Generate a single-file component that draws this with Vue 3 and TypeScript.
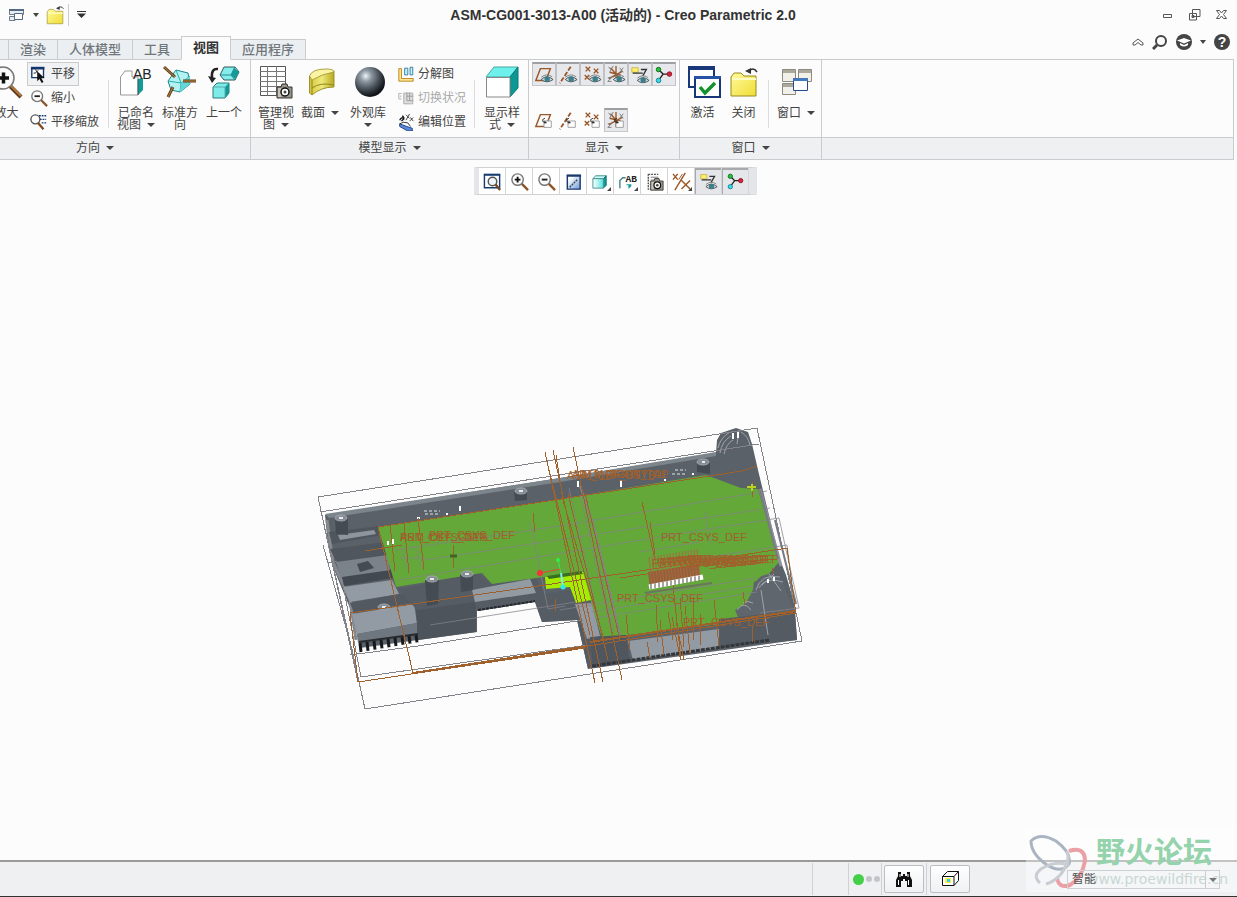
<script setup lang="ts">
import { ref } from 'vue'

interface Tool { icon: string; label: string }
interface Big extends Tool { lines: string[]; caret?: boolean; width: string }
interface Small extends Tool { framed?: boolean; off?: boolean }
interface Toggle extends Tool { on: boolean; more?: boolean }

const tabs = ['渲染', '人体模型', '工具', '视图', '应用程序']
const activeTab = ref('视图')

const orient: Big[] = [
  { icon: 'named', label: '已命名视图', lines: ['已命名', '视图'], caret: true, width: 'mid' },
  { icon: 'standard', label: '标准方向', lines: ['标准方', '向'], width: 'mid' },
  { icon: 'previous', label: '上一个', lines: ['上一个'], width: 'mid' },
]
const zooms: Small[] = [
  { icon: 'pan', label: '平移', framed: true },
  { icon: 'minus', label: '缩小' },
  { icon: 'panzoom', label: '平移缩放' },
]
const model: Big[] = [
  { icon: 'manage', label: '管理视图', lines: ['管理视', '图'], caret: true, width: 'mid' },
  { icon: 'section', label: '截面', lines: ['截面'], caret: true, width: 'mid' },
  { icon: 'sphere', label: '外观库', lines: ['外观库', ''], caret: true, width: 'wide' },
]
const explode: Small[] = [
  { icon: 'explode', label: '分解图' },
  { icon: 'switch', label: '切换状况', off: true },
  { icon: 'editpos', label: '编辑位置' },
]
const shownRows = ref<Toggle[][]>([
  [
    { icon: 'plane-eye', label: '平面显示', on: true },
    { icon: 'axis-eye', label: '轴显示', on: true },
    { icon: 'point-eye', label: '点显示', on: true },
    { icon: 'csys-eye', label: '坐标系显示', on: true },
    { icon: 'note-eye', label: '注释显示', on: true },
    { icon: 'spin', label: '旋转中心', on: true },
  ],
  [
    { icon: 'plane-tag', label: '平面标记', on: false },
    { icon: 'axis-tag', label: '轴标记', on: false },
    { icon: 'point-tag', label: '点标记', on: false },
    { icon: 'csys-tag', label: '坐标系标记', on: true },
  ],
])
const floating = ref<Toggle[]>([
  { icon: 'refit', label: '重新调整', on: false },
  { icon: 'plus', label: '放大', on: false },
  { icon: 'minus', label: '缩小', on: false },
  { icon: 'repaint', label: '重画', on: false },
  { icon: 'cube', label: '显示样式', on: false, more: true },
  { icon: 'saved', label: '已命名视图', on: false, more: true },
  { icon: 'manager', label: '视图管理器', on: false },
  { icon: 'datum', label: '基准显示过滤器', on: false, more: true },
  { icon: 'note-eye', label: '注释显示', on: true },
  { icon: 'spin', label: '旋转中心', on: true },
])
const filter = ref('智能')

const fins = [0, 1, 2, 3, 4, 5, 6, 7, 8]
const pins = Array.from({ length: 13 }, (_, i) => i)
const combs = Array.from({ length: 17 }, (_, i) => i)
const tags = [
  [400, 541], [429, 539], [661, 541], [617, 602], [683, 626],
]
const denseTags = Array.from({ length: 9 }, (_, i) => [652 + i * 5, 567 - Math.round(i / 2)])
</script>

<template>
  <div class="app">
    <svg class="defs" width="0" height="0" aria-hidden="true">
      <defs>
        <radialGradient id="ball" cx=".36" cy=".3" r=".75"><stop offset="0" stop-color="#eef3f6" /><stop offset=".25" stop-color="#8d98a2" /><stop offset=".6" stop-color="#454d55" /><stop offset=".9" stop-color="#111418" /></radialGradient>
        <linearGradient id="gold" x2="1" y2="1"><stop offset="0" stop-color="#fffb9c" /><stop offset="1" stop-color="#f0dc35" /></linearGradient>
        <linearGradient id="olive"><stop offset="0" stop-color="#d4c63c" /><stop offset=".5" stop-color="#efe97a" /><stop offset="1" stop-color="#b9a91f" /></linearGradient>
        <linearGradient id="sheet" x2="1" y2="1"><stop offset=".2" stop-color="#fff" /><stop offset="1" stop-color="#6f9bd8" /></linearGradient>
        <linearGradient id="ice"><stop offset="0" stop-color="#fff" /><stop offset="1" stop-color="#54e6e4" /></linearGradient>

        <g id="eye"><path d="M8 16Q14 10 21 16Q14 21 8 16Z" fill="#d7dde0" stroke="#444b50" /><circle cx="14.5" cy="15.5" r="3" fill="#3b7f8c" /><path d="M8 13.500Q14 8.500 20 13" fill="none" stroke="#777" /></g>
        <g id="tag"><path d="M11 13L13 11H19V18H11Z" fill="#fff" stroke="#999" /><path d="M12 8Q8 9 10 12L14 13M12 10.500V14" fill="none" stroke="#222" /></g>
        <g id="plane" fill="none" stroke="#9a5728" stroke-width="1.600"><path d="M7 4H18L13 17H2Z" /></g>
        <g id="axis"><path d="M14 2L2 20" stroke="#9a5728" stroke-width="2" stroke-dasharray="5 2" /></g>
        <g id="points" stroke="#9a5728" stroke-width="1.500"><path d="M4 2l5 5M9 2l-5 5M13 4l5 5M18 4l-5 5M3 11l5 5M8 11l-5 5" /></g>
        <g id="csys"><path d="M5 3L17 17M11 1V18M3 15L18 7M4 8L16 11" stroke="#9a5728" stroke-width="1.500" /><path d="M3 2l2 3M8 1L4 8M15 3l4 5M19 3l-4 5M2 14H6L2 18H6" fill="none" stroke="#777" /></g>
        <g id="glass"><circle cx="8" cy="8" r="6" fill="#fdfdfd" stroke="#777" stroke-width="1.500" /><path d="M12.500 12.500L19 19" stroke="#8c5428" stroke-width="2.500" /></g>
        <g id="camera"><path d="M1 4H5L6 1H11L12 4H16V15H1Z" fill="#98958c" stroke="#36342f" /><path d="M2 5H5V14H2Z" fill="#c9c5ba" /><circle cx="9" cy="9" r="4" fill="#fff" stroke="#111" stroke-width="1.500" /><circle cx="9" cy="9" r="1.500" fill="#444" /></g>
      </defs>

      <symbol id="bigplus" viewBox="0 0 36 36"><path d="M21 22L32 33" stroke="#5e3717" stroke-width="4" /><path d="M22 22L32 32" stroke="#b5763e" stroke-width="2" /><circle cx="14" cy="14" r="11" fill="#fafafa" stroke="#777" stroke-width="1.500" /><path d="M9 14H20M14.500 8.500V19.500" stroke="#111" stroke-width="3.500" /></symbol>
      <symbol id="named" viewBox="0 0 36 36"><path d="M2.500 13L7 7H14V13H20V31H2.500Z" fill="#fff" stroke="#999" /><path d="M20 15L25 14V26L20 31Z" fill="#0d9c96" /><path d="M20 15V31" stroke="#555" /><text x="15" y="15" font-family="Liberation Sans, sans-serif" font-size="14" fill="#222">AB</text></symbol>
      <symbol id="standard" viewBox="0 0 36 36"><path d="M6 17L14 6L26 9L28 20L18 28L9 26Z" fill="#b4f1f1" stroke="#18868b" /><path d="M6 17L19 19L28 12M19 19L18 28M14 6L19 19" fill="none" stroke="#27aeb2" /><path d="M19 19L28 12V20L18 28Z" fill="#63d7d8" /><path d="M2 3L13 13M21 17H34M11 23L6 33" stroke="#604019" stroke-width="3" /><path d="M2 3L13 13M21 17H34M11 23L6 33" stroke="#b98842" /></symbol>
      <symbol id="previous" viewBox="0 0 36 36"><path d="M12 5Q5 4 6 14" fill="none" stroke="#222" stroke-width="2.500" /><path d="M2 12L10 14L6 19Z" fill="#222" /><path d="M14 11L18 3H29L33 8L29 16H18Z" fill="#85eeec" stroke="#31595d" /><path d="M14 11H25L29 3M25 11L29 16" fill="none" stroke="#26888b" /><path d="M28 4L33 8L29 15L25 11Z" fill="#159999" /><path d="M7 23L11 19H23V29L19 34H7Z" fill="#7eebe9" stroke="#287a7d" /><path d="M19 23L23 19V29L19 34Z" fill="#119999" /><path d="M7 23H19V34" fill="none" stroke="#5faaac" /></symbol>
      <symbol id="manage" viewBox="0 0 36 36"><path d="M2.500 2.500H27.500V31.500H2.500Z" fill="#fff" stroke="#555" /><path d="M2 7.500H28M2 12.500H28M2 17.500H28M2 22.500H28M2 27.500H28M9.500 2V32M18.500 2V32" stroke="#777" /><use href="#camera" x="18" y="19" /></symbol>
      <symbol id="section" viewBox="0 0 36 36"><path d="M7.500 12V29L10 31Q19 23 32 23V7Z" fill="url(#olive)" stroke="#9c912b" /><path d="M7.500 12Q10 5 24 5Q32 5 32 8Q20 10 10 16Z" fill="#f8f4a4" stroke="#ada13d" /><path d="M10 16V30M10 24Q18 18 32 21" fill="none" stroke="#8e861f" /></symbol>
      <symbol id="sphere" viewBox="0 0 36 36"><circle cx="20" cy="18" r="15" fill="url(#ball)" /></symbol>
      <symbol id="style" viewBox="0 0 36 36"><path d="M2 13L10 3H34L26 13Z" fill="#6ef1ec" stroke="#4ba7a5" /><path d="M26 13L34 3V24L26 33Z" fill="#0b9793" stroke="#087a78" /><path d="M2.500 13.500H26V33H2.500Z" fill="#fff" stroke="#888" /></symbol>
      <symbol id="activate" viewBox="0 0 36 36"><path d="M4 3H29V23H4Z" fill="#fff" stroke="#173778" stroke-width="2" /><path d="M3 2H30V6H3Z" fill="#173778" /><path d="M10 13H35V33H10Z" fill="#fff" stroke="#173778" stroke-width="2" /><path d="M9 12H36V15H9Z" fill="#2454a3" /><path d="M15 23L20 29L30 19" fill="none" stroke="#13912a" stroke-width="3.500" /></symbol>
      <symbol id="folder" viewBox="0 0 36 36"><path d="M5 13L8 9H15L18 12H30V32H5Z" fill="url(#gold)" stroke="#978a24" /><path d="M6 15H30" stroke="#fffcc4" stroke-width="2" /><path d="M22 8Q27 2 31 8" fill="none" stroke="#333" stroke-width="1.500" /><path d="M19 7L25 4V10Z" fill="#333" /></symbol>
      <symbol id="windows" viewBox="0 0 36 36"><g fill="#f1f0e9" stroke="#8d8b80"><path d="M4.500 5.500H17.500V17.500H4.500ZM20.500 5.500H33.500V17.500H20.500ZM4.500 19.500H17.500V30.500H4.500Z" /></g><path d="M5 7.500H17M21 7.500H33M5 21.500H17" stroke="#aaa89b" stroke-width="3" /><path d="M15.500 14.500H29.500V26.500H15.500Z" fill="#fff" stroke="#244d88" /><path d="M15 15.500H30" stroke="#4378bd" stroke-width="3" /></symbol>

      <symbol id="pan" viewBox="0 0 20 20"><path d="M2 3H15V14H2Z" fill="#fff" stroke="#12356b" stroke-width="1.500" /><path d="M1 2H16V5H1Z" fill="#12356b" /><path d="M6 5L8 8M4 9H6M9 6L6 9" stroke="#111" /><path d="M8 7V18L10.500 15.500L13 20L15 19L12.500 14.500H16Z" fill="#111" /></symbol>
      <symbol id="minus" viewBox="0 0 20 20"><use href="#glass" /><path d="M5 8H11" stroke="#222" stroke-width="2" /></symbol>
      <symbol id="plus" viewBox="0 0 20 20"><use href="#glass" /><path d="M5 8H11M8 5V11" stroke="#111" stroke-width="2" /></symbol>
      <symbol id="panzoom" viewBox="0 0 20 20"><circle cx="6" cy="7" r="5" fill="#fff" stroke="#555" stroke-width="1.500" /><path d="M9 11L15 18" stroke="#7c481f" stroke-width="2.500" /><path d="M10 3H18M11 7H18M13 11H18" stroke="#1c3e72" stroke-width="1.500" stroke-dasharray="2 1" /></symbol>
      <symbol id="explode" viewBox="0 0 20 20"><path d="M2 4H5V15H18V18H2Z" fill="#ffe68b" stroke="#b78220" /><path d="M8.500 3.500H12V11H8.500ZM14.500 2.500H17.500V11H14.500Z" fill="#baf4ff" stroke="#33779a" /></symbol>
      <symbol id="switch" viewBox="0 0 20 20"><path d="M2 5H5M2 5V11H5M3 8H5" fill="none" stroke="#aaa" /><path d="M7.500 4.500H17.500V16.500H7.500Z" fill="#ddd" stroke="#aaa" /><path d="M11 4V13H18M14 4V13M11 8H18" fill="none" stroke="#999" /></symbol>
      <symbol id="editpos" viewBox="0 0 20 20"><path d="M3 8Q5 4 8 6L6 3M8 6L5 9" fill="none" stroke="#111" stroke-width="1.500" /><path d="M10 2L14 6M14 1L10 8M15 5L18 9M18 5L14 9" stroke="#333" /><path d="M3 12L11 15L17 17V20H12L3 15Z" fill="#5b87d6" stroke="#183f84" /><path d="M3 12Q7 9 12 11L15 15" fill="none" stroke="#222" /></symbol>
      <symbol id="refit" viewBox="0 0 20 20"><path d="M1.500 2.500H17.500V16.500H1.500Z" fill="#fff" stroke="#173d70" stroke-width="1.500" /><path d="M1 3H18" stroke="#173d70" stroke-width="2" /><circle cx="10" cy="10" r="4.500" fill="#eef6fb" stroke="#555" stroke-width="1.500" /><path d="M13 13L18 19" stroke="#764723" stroke-width="2.500" /></symbol>
      <symbol id="repaint" viewBox="0 0 20 20"><path d="M3.500 3.500H17V18H3.500Z" fill="url(#sheet)" stroke="#17396b" stroke-width="1.500" /><path d="M3 4H18" stroke="#17396b" stroke-width="2" /><path d="M6 16L14 8" stroke="#345" stroke-width="1.500" stroke-dasharray="2 1" /></symbol>
      <symbol id="cube" viewBox="0 0 20 20"><path d="M2 7L5 4H16L13 7Z" fill="#c6ffff" stroke="#398b8b" /><path d="M13 7L16 4V14L13 17Z" fill="#119b96" stroke="#16706d" /><path d="M2 7H13V17H2Z" fill="url(#ice)" stroke="#568f8f" /></symbol>
      <symbol id="saved" viewBox="0 0 20 20"><path d="M2 17V9L5 6H8" fill="none" stroke="#44868c" stroke-width="1.500" /><path d="M9 13H14V15L11 18V14H9Z" fill="#119b96" /><text x="8" y="10" font-family="Liberation Mono, monospace" font-size="10" font-weight="bold" fill="#222">AB</text></symbol>
      <symbol id="manager" viewBox="0 0 20 20"><path d="M3.500 2.500H14M3.500 2V18H6" fill="none" stroke="#555" stroke-width="1.500" stroke-dasharray="2 1" /><path d="M6 5.500H14M6 8.500H10M5 13H7" stroke="#777" /><svg x="5" y="6" width="15" height="14" viewBox="0 0 17 16"><use href="#camera" /></svg></symbol>
      <symbol id="datum" viewBox="0 0 20 20"><path d="M1 2L6 8M6 2L1 8M14 1L3 19M10 9L19 18M19 9L10 18" stroke="#9a5728" stroke-width="1.500" /><path d="M11 2L7 8" stroke="#9a5728" /></symbol>

      <symbol id="plane-eye" viewBox="0 0 22 22"><use href="#plane" /><use href="#eye" /></symbol>
      <symbol id="axis-eye" viewBox="0 0 22 22"><use href="#axis" /><use href="#eye" /></symbol>
      <symbol id="point-eye" viewBox="0 0 22 22"><use href="#points" /><use href="#eye" /></symbol>
      <symbol id="csys-eye" viewBox="0 0 22 22"><use href="#csys" /><use href="#eye" /></symbol>
      <symbol id="plane-tag" viewBox="0 0 22 22"><use href="#plane" /><use href="#tag" /></symbol>
      <symbol id="axis-tag" viewBox="0 0 22 22"><use href="#axis" /><use href="#tag" /></symbol>
      <symbol id="point-tag" viewBox="0 0 22 22"><use href="#points" /><use href="#tag" /></symbol>
      <symbol id="csys-tag" viewBox="0 0 22 22"><use href="#csys" /><use href="#tag" /></symbol>
      <symbol id="note-eye" viewBox="0 0 22 22"><path d="M2 3H9V8H2Z" fill="#ffef67" stroke="#c9b64b" /><path d="M3 9H14M12 5H18L14 12" fill="none" stroke="#333" stroke-width="1.500" /><use href="#eye" y="1" /></symbol>
      <symbol id="spin" viewBox="0 0 22 22"><path d="M5 5L10 10H17M10 10L5 17" fill="none" stroke="#222" stroke-width="1.500" /><circle cx="5" cy="5" r="2.500" fill="#20c735" stroke="#12641d" /><circle cx="17" cy="10" r="2.500" fill="#df1f3c" stroke="#861326" /><circle cx="5" cy="17" r="2.500" fill="#35dbe6" stroke="#147b91" /></symbol>
    </svg>

    <header class="titlebar">
      <nav class="quick" aria-label="快速访问">
        <button class="plain qwin" aria-label="窗口"><svg width="16" height="14" viewBox="0 0 16 14"><path d="M.5 1.500H14.500V6.500H.5ZM.5 8.500H6V12.500H.5Z" fill="#e8edf1" stroke="#6c7c8b" /><path d="M0 2H15" stroke="#536b82" stroke-width="2" /><path d="M5.500 5.500H13.500V11.500H5.500Z" fill="#fff" stroke="#536b82" /></svg></button>
        <button class="plain qarrow" aria-label="窗口列表"><i class="caret"></i></button>
        <button class="plain qfold" aria-label="关闭"><svg width="20" height="20" viewBox="2 2 31 32"><use href="#folder" width="36" height="36" /></svg></button>
        <i class="qsep"></i>
        <button class="plain qmore" aria-label="自定义"><svg width="9" height="7"><path d="M0 .5H9" stroke="#333" /><path d="M0 2.500H9L4.500 7Z" fill="#333" /></svg></button>
      </nav>
      <h1>ASM-CG001-3013-A00 (活动的) - Creo Parametric 2.0</h1>
      <div class="winctl">
        <button class="plain" aria-label="最小化"><svg width="13" height="13"><path d="M2.500 6.500H10.500V9.500H2.500Z" fill="none" stroke="#555" /></svg></button>
        <button class="plain" aria-label="还原"><svg width="13" height="13"><path d="M4.500 1.500H12V8.500H4.500ZM1.500 5.500H8.500V12H1.500ZM4 7.500H6V9.500H4Z" fill="none" stroke="#555" /></svg></button>
        <button class="plain" aria-label="关闭窗口"><svg width="13" height="13"><path d="M1.500 2.500H4.500L6.500 5L8.500 2.500H11.500L8.500 6.500L11.500 10.500H8.500L6.500 8L4.500 10.500H1.500L4.500 6.500Z" fill="#fff" stroke="#555" /></svg></button>
      </div>
    </header>

    <div class="tabrow">
      <div class="tabs" role="tablist">
        <span class="stub"></span>
        <button v-for="t in tabs" :key="t" role="tab" :aria-selected="t === activeTab" :class="['tab', { active: t === activeTab }]" @click="activeTab = t">{{ t }}</button>
      </div>
      <div class="help">
        <button class="plain" aria-label="折叠功能区"><svg width="12" height="8"><path d="M1 5L6 1L11 5V7H9L6 4.500L3 7H1Z" fill="#fff" stroke="#555" /></svg></button>
        <button class="plain" aria-label="搜索"><svg width="16" height="16"><circle cx="9" cy="7" r="5" fill="none" stroke="#444" stroke-width="2" /><path d="M5 11L1 15" stroke="#444" stroke-width="3" /></svg></button>
        <button class="plain" aria-label="学习中心"><svg width="16" height="16"><circle cx="8" cy="8" r="8" fill="#444" /><path d="M1 6.500L8 4L15 6.500L8 9.500Z" fill="#fff" /><path d="M4 9V11Q8 14 12 11V9L8 11Z" fill="#fff" /></svg></button>
        <button class="plain" aria-label="学习选项"><i class="caret"></i></button>
        <button class="plain q" aria-label="帮助">?</button>
      </div>
    </div>

    <section class="ribbon">
      <div class="group first">
        <div class="tools">
          <button class="big slim"><svg width="36" height="36"><use href="#bigplus" /></svg><span>放大</span></button>
          <div class="stack">
            <button v-for="s in zooms" :key="s.icon" :class="['small', { framed: s.framed }]"><svg width="18" height="18"><use :href="'#' + s.icon" /></svg>{{ s.label }}</button>
          </div>
          <i class="sep"></i>
          <button v-for="b in orient" :key="b.icon" :class="['big', b.width]" :aria-label="b.label">
            <svg width="36" height="36"><use :href="'#' + b.icon" /></svg>
            <span v-for="(l, i) in b.lines" :key="i">{{ l }}<i v-if="b.caret && i === b.lines.length - 1" class="caret"></i></span>
          </button>
        </div>
        <button class="foot">方向<i class="caret"></i></button>
      </div>
      <div class="group display">
        <div class="tools">
          <button v-for="b in model" :key="b.icon" :class="['big', b.width]" :aria-label="b.label">
            <svg width="36" height="36"><use :href="'#' + b.icon" /></svg>
            <span v-for="(l, i) in b.lines" :key="i">{{ l }}<i v-if="b.caret && i === b.lines.length - 1" :class="['caret', { alone: !l }]"></i></span>
          </button>
          <div class="stack">
            <button v-for="s in explode" :key="s.icon" class="small" :disabled="s.off"><svg width="18" height="18"><use :href="'#' + s.icon" /></svg>{{ s.label }}</button>
          </div>
          <i class="sep"></i>
          <button class="big mid" aria-label="显示样式"><svg width="36" height="36"><use href="#style" /></svg><span>显示样</span><span>式<i class="caret"></i></span></button>
        </div>
        <button class="foot">模型显示<i class="caret"></i></button>
      </div>
      <div class="group shown">
        <div class="tools rows">
          <div v-for="(row, r) in shownRows" :key="r" class="row">
            <button v-for="t in row" :key="t.icon" :class="['toggle', { on: t.on }]" :aria-label="t.label" :aria-pressed="t.on" @click="t.on = !t.on"><svg width="20" height="20"><use :href="'#' + t.icon" /></svg></button>
          </div>
        </div>
        <button class="foot">显示<i class="caret"></i></button>
      </div>
      <div class="group win">
        <div class="tools">
          <button class="big slim"><svg width="36" height="36"><use href="#activate" /></svg><span>激活</span></button>
          <button class="big slim"><svg width="36" height="36"><use href="#folder" /></svg><span>关闭</span></button>
          <i class="sep"></i>
          <button class="big mid"><svg width="36" height="36"><use href="#windows" /></svg><span>窗口<i class="caret"></i></span></button>
        </div>
        <button class="foot">窗口<i class="caret"></i></button>
      </div>
      <div class="group rest"><div class="tools"></div><div class="foot"></div></div>
    </section>

    <main class="viewport">
      <div class="floatbar" role="toolbar" aria-label="图形工具栏">
        <button v-for="t in floating" :key="t.label" :class="['fbtn', { on: t.on, more: t.more }]" :aria-label="t.label"><svg width="19" height="19"><use :href="'#' + t.icon" /></svg></button>
      </div>
      <svg class="model" width="500" height="300" viewBox="310 420 500 300" role="img" aria-label="ASM-CG001-3013-A00">
        <!-- housing -->
        <path d="M325 515L560 478L716 453L717 440L721 433L736 428L748 432L752 444L758 470L765 499L780 560L786 575L794 602L797 640L588 669L577 620L542 622L535 602L477 611V632L418 640L360 648L352 613L333 567L328 545Z" fill="#5b6168" />
        <path d="M325 514L560 478L716 452V456L560 482L329 518Z" fill="#7d858c" />
        <path d="M327 520L333 562L350 600L356 640" fill="none" stroke="#84898f" stroke-width="3" />
        <path d="M329 532L380 526L382 535L332 544ZM330 549L386 542L389 555L337 563Z" fill="#50565e" />
        <path d="M338 535L374 530L376 534L340 540Z" fill="#8e959c" />
        <path d="M336 562L388 555L390 571L341 578Z" fill="#7a828a" />
        <path d="M343 587L392 580L399 594L350 602Z" fill="#929aa4" />
        <path d="M342 577L391 570L393 578L344 586Z" fill="#434950" />
        <path d="M350 603L411 592L414 602L354 613Z" fill="#535960" />
        <path d="M352 614L414 604L417 623L357 634Z" fill="#929aa4" />
        <path d="M357 634L417 623V634L358 643Z" fill="#6e7680" />
        <path d="M416 610L476 601V632L418 640Z" fill="#4e545c" />
        <path d="M398 589L478 573L490 583L535 577L545 594L577 588L590 608L593 663L588 669L577 620L542 622L535 602L478 611L474 602L417 610Z" fill="#565c64" />
        <path d="M472 590L530 579L536 593L475 602Z" fill="#929aa2" />
        <path d="M575 604L592 603L600 636L587 639Z" fill="#939aa4" />
        <path d="M478 610L535 601" stroke="#24282c" stroke-width="2" stroke-dasharray="3 1" />
        <!-- board -->
        <path d="M378 527L560 499L706 475L741 488L758 489L779 562L768 575L754 582L752 598L739 612L737 622L602 638L591 602L582 572L492 584L482 573L396 587Z" fill="#63a838" />
        <path d="M545 577L583 572L591 600L576 603L570 587L546 589Z" fill="#a4ed00" />
        <path d="M547 576L581 571L583 574L549 579Z" fill="#39701d" />
        <path d="M590 637L626 635L630 662L593 668Z" fill="#50565e" />
        <path d="M628 641L719 629L719 648L633 660Z" fill="#929aa4" />
        <path d="M719 619L795 611L797 640L720 647Z" fill="#555b63" />
        <path d="M592 666L770 640" stroke="#33373b" stroke-width="3" stroke-dasharray="4 1" />
        <path d="M735 610L746 603L754 588Q757 574 771 574Q784 577 786 592L795 610L738 617Z" fill="#60666e" />
        <g fill="none" stroke="#9da4a9">
          <path d="M756 590Q761 573 780 577M759 588Q765 576 783 582M762 585L774 574M769 574L781 591M761 590L768 635" />
          <path d="M718 448Q720 438 730 432M720 453Q722 441 731 436M724 454Q726 444 733 440M739 431L737 444M741 432Q748 436 750 445" />
          <path d="M737 610Q744 600 751 610M743 603Q748 600 753 603" />
        </g>
        <path d="M733 433V439M738 432V438M768 579V583M774 577V581" fill="none" stroke="#fff" stroke-width="2" />
        <path d="M760 489L781 566" stroke="#909398" stroke-width="3" />
        <!-- fins -->
        <g stroke="#17191c" stroke-width="3"><path v-for="f in fins" :key="f" :d="`M${360 + f * 7} ${643 - f}l1 ${9 - f * 0.2}`" /></g>
        <path d="M359 642L418 634" stroke="#272b2f" stroke-width="2" />
        <!-- bosses -->
        <g>
          <path d="M335 519L336 534L348 535L348 517ZM514 492L515 501L527 500V491ZM697 463V472L710 474V462ZM425 580L427 606L438 604L439 580ZM460 574L461 592L473 590V574ZM357 564L360 572L374 568L368 561Z" fill="#444b52" />
          <g fill="#858c92" stroke="#a2a8ad"><ellipse cx="341" cy="518" rx="6" ry="3" /><ellipse cx="521" cy="491" rx="6" ry="3" /><ellipse cx="703" cy="462" rx="6" ry="3" /><ellipse cx="432" cy="579" rx="6" ry="3" /><ellipse cx="467" cy="574" rx="6" ry="3" /><ellipse cx="384" cy="607" rx="6" ry="3" /></g>
          <path d="M339 518H343M519 491H523M702 462H705M430 579H434M465 574H469M382 607H386" stroke="#e8eaec" stroke-width="2" />
        </g>
        <path d="M424 511H440M425 514H438M672 474H686M675 470H686" stroke="#9da4a9" stroke-width="2" stroke-dasharray="3 2" />
        <path d="M417 518H420M446 514H448M460 506V511M578 481V487M621 480V487M664 480H666M692 474H694M388 541V545M393 539V544" stroke="#fff" stroke-width="2" />
        <!-- grey datum planes -->
        <g fill="none" stroke="#85838a">
          <path d="M318 497L757 428L802 641L365 709ZM320 512L759 444M323 545L353 653M318 497L358 682M342 580L361 677L588 645M327 563L337 561M350 655L418 646L583 620" shape-rendering="crispEdges" />
          <path opacity=".75" d="M395 550L560 526L767 491M425 560L770 508M398 580L690 532L779 518L799 608L760 613M530 522L548 609L565 606M560 610L756 578M430 625L576 602M569 488L601 630M580 495L612 635M582 492L614 632M640 552L700 542M400 558H427M402 548L408 570M415 546L422 568M592 612L753 586M596 618L757 592M690 560L787 545L794 600M705 512L711 545" />
          <path d="M580 486L592 520L604 568L620 635" stroke-width="2" />
        </g>
        <path d="M760 490L778 559M775 520L796 604" stroke="#777b83" stroke-width="2" />
        <!-- brown datum planes and axes -->
        <g fill="none" stroke="#a0602c" shape-rendering="crispEdges">
          <path d="M378 527L561 499L742 471M742 471L757 466M378 527L413 673M413 673L588 646L796 613M350 613L358 682L585 648M350 613L545 585L646 570L787 548L796 614" />
          <path d="M545 452L595 683M553 450L603 682M573 447L622 680M549 470L590 635M556 455L563 500L604 640M568 493L608 660M585 493L620 640" />
          <path d="M390 525L395 571M404 523L409 573M418 518L424 570M533 513L535 532M453 545L454 568M365 551L402 545M642 502L655 560M650 522L655 555M620 578L700 566" />
          <path d="M626 615L630 650M656 605L658 642M660 620L664 655M673 585L681 660M680 598L684 647M685 606L690 653M714 600L719 646M752 625V642M743 592L745 605M772 568L774 574M752 482L753 497M555 599V611M647 642L650 658M693 597V640M700 614V645" />
          <path d="M413 673L588 646M590 642L768 615L796 611" stroke-width="2" />
          <path d="M672 617L680 657M676 621L684 660M668 612L673 640" />
        </g>
        <!-- connector -->
        <path d="M648 572L698 564L701 578L650 588Z" fill="#955f39" />
        <g stroke="#a76b41"><path v-for="c in combs" :key="c" :d="`M${649 + c * 3} ${557 - c * 0.5}l3 30`" /></g>
        <path d="M649 587L703 577" stroke="#fff" stroke-width="5" />
        <g stroke="#4b4b3d"><path v-for="p in pins" :key="p" :d="`M${651 + p * 4} ${584 - p * 0.7}v5`" /></g>
        <path d="M645 593L712 583" stroke="#6c745f" stroke-width="2" />
        <path d="M747 487H756M752 484V491" stroke="#b9d31c" stroke-width="2" />
        <path d="M450 556H457" stroke="#426424" stroke-width="3" />
        <!-- spin centre -->
        <path d="M540 573L561 569" stroke="#e7442e" /><path d="M558 560L561 573" stroke="#36e65c" /><path d="M561 573L563 587" stroke="#7ef0e5" stroke-width="2" />
        <circle cx="540" cy="573" r="3" fill="#f43535" /><circle cx="558" cy="560" r="2" fill="#31eb49" /><circle cx="563" cy="587" r="2.500" fill="#30e9ef" />
        <g class="tags">
          <text v-for="(t, i) in tags" :key="i" :x="t[0]" :y="t[1]">PRT_CSYS_DEF</text>
          <text x="567" y="479">ASM_DEF_CSYS</text><text x="572" y="478">ADTM_FRONT_A1</text><text x="580" y="478">A_2_RIGHT_TOP</text>
          <text x="400" y="541">ASM_DEF_CSYS</text>
          <text v-for="(t, i) in denseTags" :key="'d' + i" :x="t[0]" :y="t[1]">PRT_CSYS_DEF</text>
        </g>
      </svg>
    </main>

    <footer class="status">
      <div class="lights"><i class="green"></i><i></i><i></i></div>
      <div class="cell"><button class="sbtn" aria-label="查找"><svg width="18" height="18"><path d="M3 2H6V6H8V4H10V6H12V2H15V6L17 10V17H12V11H10V9H8V11H6V17H1V10L3 6Z" fill="#111" /><path d="M3.500 10V15M13.500 10V15M5 4V7M13 4V7" stroke="#fff" /></svg></button></div>
      <div class="cell last"><button class="sbtn" aria-label="选择区域"><svg width="20" height="18"><path d="M2.500 6.500L7.500 1.500H18.500V10.500L14 15.500H2.500ZM2.500 6.500H14V15.500M14 6.500L18.500 1.500" fill="#fff" stroke="#111" /><path d="M5 8H11V13H5Z" fill="#ffee3a" /><path d="M7 9H10V12H7Z" fill="#32cfef" /></svg></button></div>
      <div class="brand">
        <svg width="60" height="56" viewBox="0 0 60 56" fill="none"><path d="M3 8Q12 -1 28 8Q44 20 41 31Q34 41 19 32Q3 21 3 8Z" stroke="#aab5c1" stroke-width="3" /><path d="M41 18Q57 13 57 28Q54 45 42 52Q31 56 29 45" stroke="#eba0a6" stroke-width="4" /><path d="M41 32Q27 27 13 36Q4 43 12 50M18 51Q26 49 33 41Q43 28 39 18" stroke="#c8cdd4" stroke-width="3" /></svg>
        <strong>野火论坛</strong><span>www.proewildfire.cn</span>
      </div>
      <label class="pick"><select v-model="filter" aria-label="选择过滤器"><option>智能</option><option>几何</option></select><i class="caret"></i></label>
    </footer>
  </div>
</template>

<style>
body { margin: 0; background: #fcfcfc; }
</style>

<style scoped>
.app { min-height: 100vh; display: flex; flex-direction: column; overflow: hidden; position: relative; background: #fcfcfc; color: #444; font: 12px/12px "Liberation Sans", "Noto Sans CJK SC", sans-serif; }
.defs { position: absolute; }
button { font: inherit; color: inherit; cursor: pointer; padding: 0; margin: 0; border: 0; background: none; }
svg { display: block; flex: none; }
.caret { display: inline-block; border: 4px solid transparent; border-top: 4px solid #444; border-bottom: 0; margin-left: 6px; }
.plain { display: flex; align-items: center; justify-content: center; }
.plain .caret { margin: 0; border-left-width: 3px; border-right-width: 3px; }

.titlebar { height: 29px; display: grid; grid-template-columns: 1fr auto 1fr; align-items: center; padding-left: 9px; }
.quick { display: flex; align-items: center; }
.qarrow { width: 22px; }
.qfold { margin-left: -2px; }
.qsep { width: 1px; height: 22px; background: #ccc; margin: 0 8px 0 3px; }
h1 { margin: 0; font-size: 14px; line-height: 18px; color: #333; font-weight: bold; white-space: nowrap; }
.winctl { display: flex; justify-content: flex-end; gap: 14px; padding-right: 9px; }

.tabrow { display: flex; justify-content: space-between; align-items: flex-end; height: 30px; }
.tabs { display: flex; align-items: flex-end; position: relative; z-index: 1; margin-bottom: -1px; }
.stub { width: 8px; height: 19px; background: #eceff1; border-top: 1px solid #c9cbce; border-bottom: 1px solid #c9cbce; }
.tab { height: 21px; padding: 0 11px; font-size: 13px; line-height: 18px; color: #70767c; font-weight: 500; background: #eceff1; border: 1px solid #c9cbce; border-right-width: 0; }
.tab:last-child { border-right-width: 1px; }
.tab.active { height: 24px; background: #fcfcfc; border-right-width: 1px; border-bottom-color: #fcfcfc; color: #333; font-weight: bold; }
.tab.active + .tab { border-left-width: 0; }
.help { display: flex; align-items: center; gap: 8px; height: 16px; margin-bottom: 9px; padding-right: 7px; }
.q { width: 16px; height: 16px; border-radius: 8px; background: #444; color: #fff; font-weight: bold; font-size: 14px; }

.ribbon { display: flex; border: 1px solid #c9cbce; border-left: 0; margin-right: 3px; height: 99px; }
.group { display: flex; flex-direction: column; border-right: 1px solid #c9cbce; flex: none; }
.tools { flex: 1; display: flex; align-items: flex-start; }
.foot { box-sizing: border-box; height: 22px; display: flex; align-items: center; justify-content: center; background: #eef0f2; border-top: 1px solid #c9cbce; padding-bottom: 2px; }
.first { width: 310px; margin-left: -60px; }
.first .tools { justify-content: flex-end; padding-right: 4px; }
.display { width: 277px; }
.display .tools { padding-left: 3px; }
.shown { width: 150px; }
.win { width: 141px; }
.win .tools { padding-left: 2px; }
.rest { flex: 1; border: 0; }
.big { display: flex; flex-direction: column; align-items: center; padding-top: 4px; white-space: nowrap; }
.big svg { margin-bottom: 7px; }
.big span { min-height: 12px; display: flex; align-items: center; }
.caret.alone { margin-left: 0; }
.slim { width: 41px; }
.mid { width: 44px; }
.wide { width: 52px; }
.stack { display: flex; flex-direction: column; padding-top: 2px; width: 77px; align-items: flex-start; }
.display .stack { width: 76px; }
.small { height: 24px; display: flex; align-items: center; gap: 3px; padding: 0 3px 0 2px; border: 1px solid transparent; white-space: nowrap; }
.small.framed { border-color: #c9cbce; background: #f0f2f4; }
.small:disabled { color: #aaa; }
.sep { width: 1px; height: 48px; margin: 20px 5px 0 4px; background: #dadcdf; }
.rows { flex-direction: column; justify-content: space-between; padding: 2px 3px 5px; }
.row { display: flex; }
.toggle { width: 24px; height: 24px; display: flex; align-items: center; justify-content: center; border: 1px solid transparent; border-top-width: 2px; }
.toggle.on { background: #e6e8eb; border-color: #9d9fa3 #bfc1c5 #c7c9cc; }

.viewport { flex: 1; position: relative; display: flex; justify-content: center; align-items: flex-start; padding: 7px 6px 0 0; }
.floatbar { display: flex; border: 1px solid #cfd1d4; border-left-width: 5px; border-right-width: 8px; border-left-color: #e4e5e8; border-right-color: #e4e5e8; background: #fff; }
.fbtn { width: 27px; height: 26px; display: flex; align-items: center; justify-content: center; border-right: 1px solid #d3d5d8; position: relative; }
.fbtn.on { background: #e4e6e9; box-shadow: inset 1px 2px #a7a9ad; }
.fbtn.more::after { content: ""; position: absolute; right: 2px; bottom: 3px; border: 2px solid #444; border-left-color: transparent; border-top-color: transparent; }
.model { position: absolute; left: 310px; top: 260px; }
.tags text { font: 11px "Liberation Sans", sans-serif; fill: #a0602c; }

.status { position: relative; display: flex; align-items: center; height: 34px; background: #eef0f2; border-top: 2px solid #9a9a9a; border-bottom: 1px solid #303236; }
.lights { margin-left: 812px; border-left: 1px solid #cfd1d4; padding-left: 40px; width: 28px; height: 32px; display: flex; align-items: center; gap: 2px; background: linear-gradient(#cfd1d4, #cfd1d4) 35px 0 / 1px 100% no-repeat; }
.lights i { width: 6px; height: 6px; border-radius: 50%; background: #c3c5c8; flex: none; }
.lights .green { width: 11px; height: 11px; background: #43cf48; }
.cell { border-left: 1px solid #cfd1d4; padding: 2px; height: 28px; }
.cell.last { padding-left: 3px; }
.sbtn { width: 40px; height: 28px; border: 1px solid #bcbec2; border-radius: 2px; background: linear-gradient(#fff, #eef0f2); display: flex; align-items: center; justify-content: center; }
.pick { margin-left: auto; margin-right: 17px; position: relative; width: 153px; height: 19px; }
.pick select { width: 100%; height: 100%; appearance: none; border: 1px solid #cdd0d3; background: transparent; border-radius: 0; font: inherit; color: #555; padding: 0 4px; }
.pick .caret { position: absolute; right: 3px; top: 8px; pointer-events: none; border-top-color: #777; }
.pick::after { content: ""; position: absolute; right: 14px; top: 1px; height: 17px; width: 1px; background: #ccc; }
.brand { position: absolute; right: 0; bottom: 4px; width: 211px; height: 64px; pointer-events: none; background: #ffffff66; }
.brand svg { position: absolute; left: 2px; top: 5px; }
.brand strong { position: absolute; left: 70px; top: 4px; font: bold 29px/36px "Noto Sans CJK SC", sans-serif; color: #94d3ac; white-space: nowrap; }
.brand span { position: absolute; right: 9px; bottom: 4px; font: 14px/18px "DejaVu Sans", sans-serif; color: #c8d8d4; white-space: nowrap; }
</style>
